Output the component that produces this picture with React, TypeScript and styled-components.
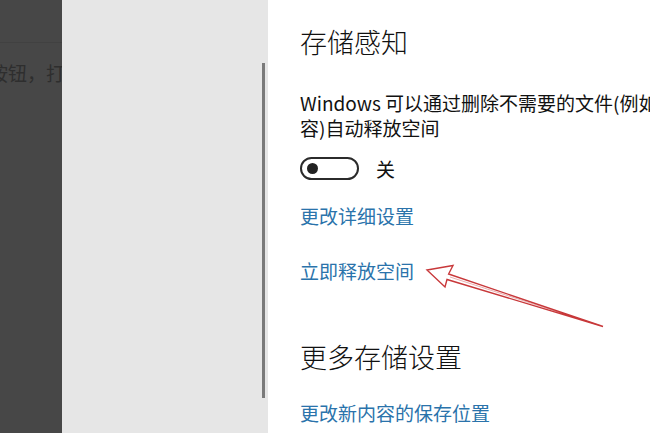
import * as React from 'react';
import styled, { createGlobalStyle } from 'styled-components';

const GlobalStyle = createGlobalStyle`
  html, body {
    margin: 0;
    padding: 0;
    background: #ffffff;
  }
  body {
    font-family: "Noto Sans CJK SC", "Noto Sans", sans-serif;
  }
`;

const colors = {
  dark: '#474747',
  darkText: '#2e2e2e',
  panel: '#e6e6e6',
  thumb: '#7a7a7a',
  ink: '#111111',
  link: '#2a73ab',
  arrow: '#c8383a',
};

const App = () => (
  <>
    <GlobalStyle />
    <Page>
      <LeftStrip>
        <StripRule />
        <StripText>按钮，打开</StripText>
      </LeftStrip>
      <NavPanel>
        <ScrollThumb />
      </NavPanel>
      <Content>
        <Heading>存储感知</Heading>
        <Description>
          Windows 可以通过删除不需要的文件(例如临时文件和回收站中的内
          <br />
          容)自动释放空间
        </Description>
        <ToggleRow>
          <Toggle>
            <Knob />
          </Toggle>
          <ToggleLabel>关</ToggleLabel>
        </ToggleRow>
        <Link $gap={22}>更改详细设置</Link>
        <Link $gap={30}>立即释放空间</Link>
        <Heading $gap={57}>更多存储设置</Heading>
        <Link $gap={26}>更改新内容的保存位置</Link>
      </Content>
      <Annotation viewBox="0 0 650 433">
        <polygon
          points="427,270 453,265.5 448.6,274 603,326.5 447,279.5 445,287"
          fill="none"
          stroke={colors.arrow}
          strokeWidth="1.4"
          strokeLinejoin="miter"
        />
        <line x1="450" y1="277" x2="600" y2="325.5" stroke={colors.arrow} strokeWidth="0.8" opacity="0.5" />
      </Annotation>
    </Page>
  </>
);

const Page = styled.div`
  position: relative;
  width: 650px;
  height: 433px;
  overflow: hidden;
  display: flex;
  background: #ffffff;
`;

const LeftStrip = styled.div`
  width: 62px;
  flex-shrink: 0;
  background: ${colors.dark};
  overflow: hidden;
  display: flex;
  flex-direction: column;
`;

const StripRule = styled.div`
  margin-top: 42px;
  height: 1px;
  background: #414141;
`;

const StripText = styled.div`
  margin-top: 17px;
  margin-left: -11px;
  white-space: nowrap;
  font-size: 19px;
  line-height: 25px;
  color: ${colors.darkText};
`;

const NavPanel = styled.div`
  width: 206px;
  flex-shrink: 0;
  background: ${colors.panel};
  display: flex;
  justify-content: flex-end;
  padding-right: 3px;
  box-sizing: border-box;
`;

const ScrollThumb = styled.div`
  width: 3px;
  height: 335px;
  margin-top: 63px;
  background: ${colors.thumb};
`;

const Content = styled.div`
  flex: 1;
  min-width: 0;
  padding: 25px 0 0 32px;
  display: flex;
  flex-direction: column;
  align-items: flex-start;
  overflow: hidden;
`;

const Heading = styled.h2<{ $gap?: number }>`
  margin: ${p => p.$gap ?? 0}px 0 0;
  font-size: 27px;
  line-height: 34px;
  font-weight: 300;
  color: ${colors.ink};
  white-space: nowrap;
`;

const Description = styled.p`
  margin: 31px 0 0;
  font-size: 19px;
  line-height: 25px;
  color: ${colors.ink};
  white-space: nowrap;
`;

const ToggleRow = styled.div`
  margin-top: 16px;
  display: flex;
  align-items: center;
  gap: 17px;
`;

const Toggle = styled.div`
  width: 59px;
  height: 23px;
  box-sizing: border-box;
  border: 2px solid #2b2b2b;
  border-radius: 12px;
  display: flex;
  align-items: center;
  padding-left: 5px;
`;

const Knob = styled.div`
  width: 11px;
  height: 11px;
  border-radius: 50%;
  background: #222222;
`;

const ToggleLabel = styled.span`
  font-size: 19px;
  line-height: 25px;
  color: ${colors.ink};
`;

const Link = styled.a<{ $gap: number }>`
  margin-top: ${p => p.$gap}px;
  font-size: 19px;
  line-height: 25px;
  color: ${colors.link};
  text-decoration: none;
  white-space: nowrap;
  cursor: pointer;
`;

const Annotation = styled.svg`
  position: absolute;
  left: 0;
  top: 0;
  width: 650px;
  height: 433px;
  pointer-events: none;
`;

export default App;
